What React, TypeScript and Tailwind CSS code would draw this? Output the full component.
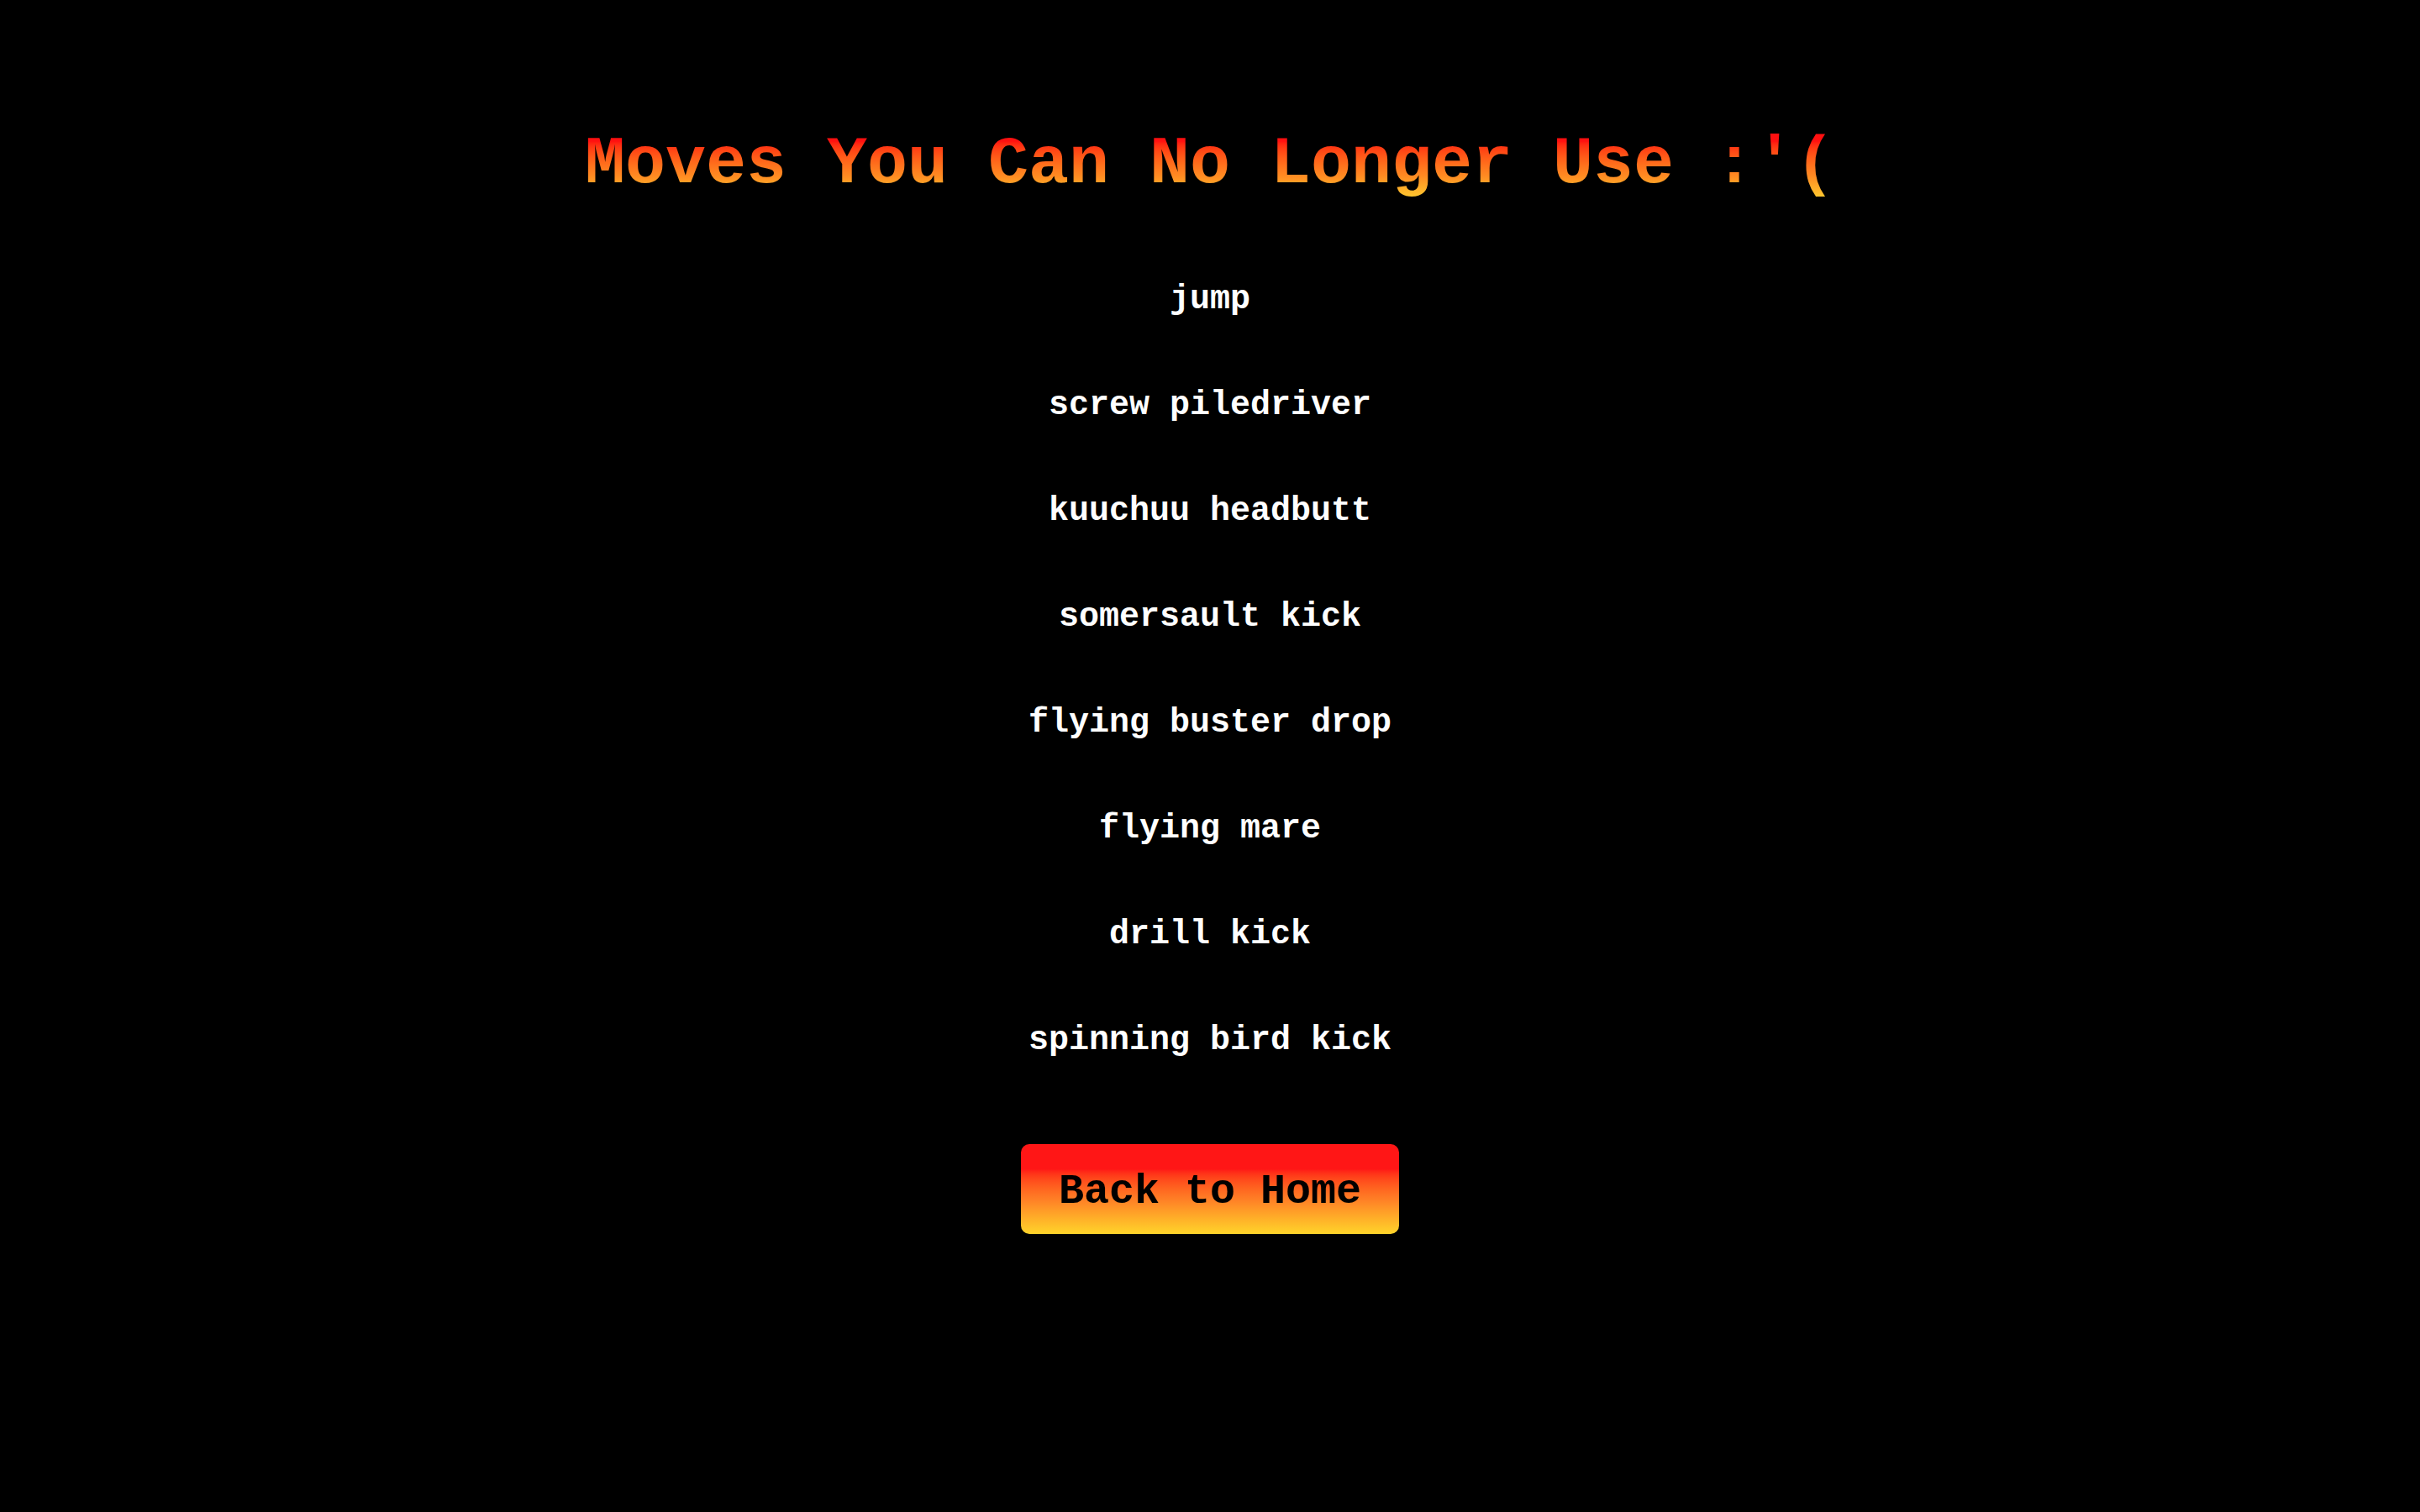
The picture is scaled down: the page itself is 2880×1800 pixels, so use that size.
import React from 'react';

const moves: string[] = [
  "jump",
  "screw piledriver",
  "kuuchuu headbutt",
  "somersault kick",
  "flying buster drop",
  "flying mare",
  "drill kick",
  "spinning bird kick"
];

export default function App() {
  return (
    <div className="min-h-screen w-full bg-black font-['Courier_New','Nimbus_Mono_PS','Nimbus_Mono_L','FreeMono','Liberation_Mono',monospace] font-bold">
      <div className="flex flex-col items-center pt-[150px]">
        {/* Title */}
        <h1 className="text-[80px] leading-[91px] font-bold bg-gradient-to-b from-[#ff1010] from-[20%] via-[#ff8a22] via-[65%] to-[#ffd632] bg-clip-text text-transparent whitespace-pre">
          Moves You Can No Longer Use :'(
        </h1>

        {/* Moves list */}
        <ul className="mt-[93px] flex flex-col items-center gap-[80px]">
          {moves.map((move, index) => (
            <li key={index} className="text-white text-[40px] leading-[46px] whitespace-pre">
              {move}
            </li>
          ))}
        </ul>

        {/* Back button */}
        <button className="mt-[100px] rounded-[10px] px-[45px] pt-[28px] pb-[22px] text-[50px] leading-[57px] text-black font-bold bg-gradient-to-b from-[#ff1616] from-[28%] via-[#ff8026] via-[62%] to-[#ffd42a]">
          Back to Home
        </button>
      </div>
    </div>
  );
}
